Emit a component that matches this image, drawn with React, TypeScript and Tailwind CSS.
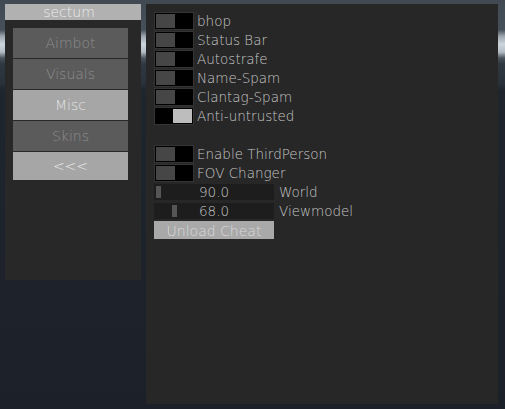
import React from "react";

const font = { fontFamily: "'DejaVu Sans', sans-serif" };

const tabs = [
  { name: "Aimbot", active: false },
  { name: "Visuals", active: false },
  { name: "Misc", active: true },
  { name: "Skins", active: false },
];

function Toggle({ label, on = false }: { label: string; on?: boolean }) {
  return (
    <div className="flex h-[18px] items-center">
      <div className="flex h-[18px] w-[40px] border border-[#343434] bg-black p-px">
        {on ? (
          <div className="ml-auto h-full w-[19px] bg-[#bdbdbd]" />
        ) : (
          <div className="h-full w-[19px] bg-[#464646]" />
        )}
      </div>
      <span className="ml-[3px] pt-[2px] text-[13.5px] leading-none text-[#c6c6c6]">{label}</span>
    </div>
  );
}

function Slider({ label, value, pos }: { label: string; value: string; pos: number }) {
  return (
    <div className="flex h-[18px] items-center">
      <div className="relative flex h-[16px] w-[120px] items-center justify-center bg-[#1d1d1d]">
        <div
          className="absolute top-[2px] h-[12px] w-[5px] bg-[#555555]"
          style={{ left: pos }}
        />
        <span className="pt-[2px] text-[13.5px] leading-none text-[#c6c6c6]">{value}</span>
      </div>
      <span className="ml-[5px] pt-[2px] text-[13.5px] leading-none text-[#c6c6c6]">{label}</span>
    </div>
  );
}

export default function App() {
  return (
    <div
      className="flex h-[409px] w-[505px] items-start gap-[5px] bg-[linear-gradient(to_bottom,#414a53_0px,#46505a_30px,#9aa3ac_36px,#cdd5dd_44px,#b4bcc4_52px,#4a535c_58px,#2f3740_64px,#283039_84px,#1f252d_90px,#1c2129_100%)] pl-[5px] pt-[4px] font-extralight"
      style={font}
    >
      {/* left nav */}
      <div className="flex w-[136px] flex-col">
        <div className="flex h-[16px] items-center justify-center bg-[#b1b1b1] pr-[8px] text-[14px] leading-none text-[#ececec]">
          sectum
        </div>
        <div className="flex h-[260px] flex-col gap-px bg-[#292828] pl-[8px] pt-[8px]">
          {tabs.map((t) => (
            <div
              key={t.name}
              className={`flex h-[30px] w-[115px] items-center justify-center text-[14px] ${
                t.active ? "bg-[#a6a6a6] text-[#e4e4e4]" : "bg-[#5b5b5b] text-[#8d8d8d]"
              }`}
            >
              {t.name}
            </div>
          ))}
          <div className="flex h-[28px] w-[115px] items-center justify-center bg-[#a6a6a6] text-[14px] text-[#f0f0f0]">
            &lt;&lt;&lt;
          </div>
        </div>
      </div>

      {/* content */}
      <div className="flex h-[400px] w-[352px] flex-col gap-px bg-[#272727] pl-[8px] pt-[8px]">
        <Toggle label="bhop" />
        <Toggle label="Status Bar" />
        <Toggle label="Autostrafe" />
        <Toggle label="Name-Spam" />
        <Toggle label="Clantag-Spam" />
        <Toggle label="Anti-untrusted" on />
        <div className="h-[18px]" />
        <Toggle label="Enable ThirdPerson" />
        <Toggle label="FOV Changer" />
        <Slider label="World" value="90.0" pos={2} />
        <Slider label="Viewmodel" value="68.0" pos={18} />
        <div className="flex h-[18px] w-[120px] items-center justify-center bg-[#a9a9a9] pt-[2px] text-[14px] leading-none text-[#dadada]">
          Unload Cheat
        </div>
      </div>
    </div>
  );
}
